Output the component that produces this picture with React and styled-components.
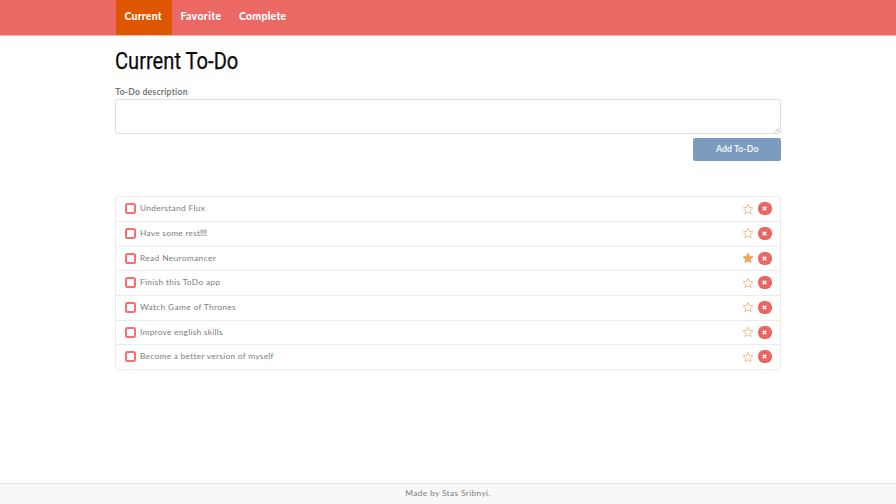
import React from "react";
import styled, { createGlobalStyle } from "styled-components";

const Global = createGlobalStyle`
  * { box-sizing: border-box; }
  body { margin: 0; background: #fff; color: #7d7d7d; font-family: Lato, sans-serif; font-size: 8.4px; }
`;
const Page = styled.div`
  height: 504px;
  display: flex;
  flex-direction: column;
  overflow: hidden;
`;
const Nav = styled.nav`
  height: 35.5px;
  flex: none;
  display: flex;
  padding-left: 115.6px;
  background: linear-gradient(#ec6864 35px, #f6b4b2 35px);
`;
const Tab = styled.a`
  width: ${(p) => p.$w}px;
  height: 35px;
  padding: 9px 0 0 8.8px;
  line-height: 14px;
  color: #fff;
  font-size: 10.5px;
  font-weight: 900;
  white-space: nowrap;
  background: ${(p) => (p.$active ? "#de5600" : "transparent")};
`;
const Spaced = styled.span`
  letter-spacing: ${(p) => p.$s}px;
  white-space: pre;
`;
const Main = styled.main`
  width: 666px;
  margin-left: 115.3px;
  flex: 1;
  display: flex;
  flex-direction: column;
`;
const Title = styled.h1`
  margin: 10.5px 0 0;
  height: 30px;
  align-self: flex-start;
  color: #0c0c0c;
  font: 400 24px/30px Roboto, sans-serif;
  transform: scaleX(0.838);
  transform-origin: left;
  -webkit-text-stroke: 0.25px #0c0c0c;
`;
const Label = styled.label`
  margin-top: 10px;
  height: 13px;
  line-height: 13px;
  font-size: 8.6px;
  font-weight: 700;
  color: #747474;
`;
const Field = styled.div`
  position: relative;
  height: 35px;
  flex: none;
`;
const Input = styled.textarea`
  display: block;
  width: 100%;
  height: 100%;
  border: 1px solid #dedede;
  border-radius: 2.5px;
  resize: none;
  outline: 0;
  background: #fff;
`;
const Grip = styled.svg`
  position: absolute;
  right: 1px;
  bottom: 1px;
  width: 6px;
  height: 6px;
`;
const Button = styled.button`
  align-self: flex-end;
  flex: none;
  margin-top: 4px;
  width: 88px;
  height: 23px;
  padding: 0 0 2px;
  border: 0;
  border-radius: 2px;
  background: #7c9cbf;
  color: #eff4f9;
  font: 700 8.7px Lato, sans-serif;
`;
const List = styled.ul`
  list-style: none;
  margin: 35px 0 0;
  padding: 0;
  border: 1px solid #ebebeb;
  border-radius: 2.5px;
`;
const Row = styled.li`
  height: 24.7px;
  display: flex;
  align-items: center;
  padding: 0 8.5px 1px 9px;
  &:first-child { height: 24px; }
  & + & { border-top: 1px solid #ebebeb; }
  &:last-child { height: 24.3px; }
`;
const Check = styled.span`
  width: 11px;
  height: 11px;
  flex: none;
  border: 2px solid #f96f6e;
  border-radius: 2.5px;
  margin-right: 3.7px;
`;
const Text = styled.span`
  flex: 1;
  line-height: 12px;
  padding-bottom: 1px;
`;
const Marks = styled.span`
  color: #a89c98;
  background: linear-gradient(#eae4e1, #eae4e1) center / 100% 7px no-repeat;
  font-weight: 700;
  letter-spacing: -0.1px;
`;
const Star = styled.svg`
  width: 12px;
  height: 12px;
  margin-right: 4px;
`;
const Remove = styled.span`
  width: 14px;
  height: 13px;
  border-radius: 6px;
  background: #e96763;
  display: grid;
  place-items: center;
  svg { width: 5px; height: 5px; }
`;
const Footer = styled.footer`
  height: 21px;
  flex: none;
  border-top: 1px solid #e2e2e2;
  background: #f8f8f8;
  text-align: center;
  line-height: 19px;
`;

const tabs = [
  { label: "Current", width: 56, spacing: 0.22, active: true },
  { label: "Favorite", width: 58.5, spacing: 0.36 },
  { label: "Complete", width: 66, spacing: 0.26 },
];
const items = [
  { text: "Understand Flux", spacing: 0.3 },
  { text: "Have some rest", spacing: 0.25, marks: "!!!" },
  { text: "Read Neuromancer", spacing: 0.35, favorite: true },
  { text: "Finish this ToDo app", spacing: 0.3 },
  { text: "Watch Game of Thrones", spacing: 0.33 },
  { text: "Improve english skills", spacing: 0.24 },
  { text: "Become a better version of myself", spacing: 0.27 },
];

function TodoRow({ item }) {
  return (
    <Row>
      <Check />
      <Text>
        <Spaced $s={item.spacing}>{item.text}</Spaced>
        {item.marks && <Marks>{item.marks}</Marks>}
      </Text>
      <Star viewBox="0 0 24 24">
        <path
          d="M12 2.500l2.900 6.300 6.900.8-5.100 4.700 1.400 6.800L12 17.700l-6.100 3.400 1.400-6.800L2.200 9.600l6.900-.8z"
          fill={item.favorite ? "#efa55c" : "none"}
          stroke={item.favorite ? "#efa55c" : "#f2ba87"}
          strokeWidth="1.900"
        />
      </Star>
      <Remove>
        <svg viewBox="0 0 5 5">
          <path d="M.7.7l3.600 3.600M4.300.7L.7 4.300" stroke="#fff" strokeWidth="1.400" />
        </svg>
      </Remove>
    </Row>
  );
}

export default function App() {
  return (
    <Page>
      <Global />
      <Nav>
        {tabs.map((t) => (
          <Tab key={t.label} $w={t.width} $active={t.active}>
            <Spaced $s={t.spacing}>{t.label}</Spaced>
          </Tab>
        ))}
      </Nav>
      <Main>
        <Title>Current To-Do</Title>
        <Label><Spaced $s={0.23}>To-Do description</Spaced></Label>
        <Field>
          <Input />
          <Grip viewBox="0 0 6 6">
            <path d="M.5 5.500l5-5M3 5.500L5.500 3" stroke="#b5b5b5" strokeWidth=".8" />
          </Grip>
        </Field>
        <Button><Spaced $s={0.13}>Add To-Do</Spaced></Button>
        <List>
          {items.map((item) => <TodoRow key={item.text} item={item} />)}
        </List>
      </Main>
      <Footer><Spaced $s={0.35}>Made by Stas Sribnyi.</Spaced></Footer>
    </Page>
  );
}
